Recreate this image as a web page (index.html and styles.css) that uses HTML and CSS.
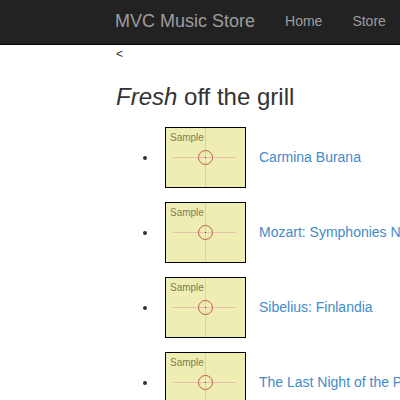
FILE: index.html
```html
<!DOCTYPE html>
<html>
<head>
<meta charset="utf-8">
<link rel="stylesheet" href="styles.css">
</head>
<body>
<div class="navbar">
  <a class="brand" href="#">MVC Music Store</a>
  <a class="nav-link" href="#">Home</a>
  <a class="nav-link" href="#">Store</a>
</div>
<div class="container">
  <div class="back">&lt;</div>
  <h3 class="title"><em>Fresh</em> off the grill</h3>
  <ul class="albums">
    <li class="album"><span class="art"><span class="sample">Sample</span><span class="hline"></span><span class="vline"></span><span class="circle"></span><span class="dot"></span></span><a class="album-link" href="#">Carmina Burana</a></li>
    <li class="album"><span class="art"><span class="sample">Sample</span><span class="hline"></span><span class="vline"></span><span class="circle"></span><span class="dot"></span></span><a class="album-link" href="#">Mozart: Symphonies Nos. 40 &amp; 41</a></li>
    <li class="album"><span class="art"><span class="sample">Sample</span><span class="hline"></span><span class="vline"></span><span class="circle"></span><span class="dot"></span></span><a class="album-link" href="#">Sibelius: Finlandia</a></li>
    <li class="album"><span class="art"><span class="sample">Sample</span><span class="hline"></span><span class="vline"></span><span class="circle"></span><span class="dot"></span></span><a class="album-link" href="#">The Last Night of the Proms</a></li>
  </ul>
</div>
</body>
</html>
```
FILE: styles.css
```css
html, body {
  margin: 0;
  padding: 0;
  overflow: hidden;
}
body {
  font-family: "Liberation Sans", Arial, sans-serif;
  font-size: 14px;
  line-height: 1.42857;
  color: #333;
  background: #fff;
  width: 400px;
}
.navbar {
  background: #222;
  border-bottom: 1px solid #080808;
  height: 44px;
  display: flex;
  align-items: center;
  padding-left: 115px;
  white-space: nowrap;
}
.brand {
  font-size: 18px;
  color: #9d9d9d;
  text-decoration: none;
  margin-right: 30px;
}
.nav-link {
  color: #9d9d9d;
  text-decoration: none;
  margin-right: 30px;
}
.container {
  padding-left: 116px;
  white-space: nowrap;
}
.back {
  font-size: 12px;
  line-height: 16px;
  margin-top: 1px;
}
.title {
  font-size: 24px;
  font-weight: 500;
  line-height: 1.1;
  margin: 22px 0 10px;
  color: #333;
}
.albums {
  margin: 17px 0 0;
  padding-left: 42px;
  list-style: disc;
}
.album {
  margin-bottom: 14px;
  height: 61px;
}
.art {
  display: inline-block;
  vertical-align: middle;
  position: relative;
  margin-left: 7px;
  width: 81px;
  height: 61px;
  box-sizing: border-box;
  border: 1px solid #000;
  background: #eeeeb2;
}
.sample {
  position: absolute;
  left: 4px;
  top: 4px;
  font-family: "Liberation Sans", sans-serif;
  font-size: 10px;
  line-height: 11px;
  color: #7d7d58;
}
.hline {
  position: absolute;
  left: 7px;
  right: 9px;
  top: 29px;
  height: 1px;
  background: #e8bfa8;
}
.vline {
  position: absolute;
  top: 0;
  bottom: 0;
  left: 39px;
  width: 1px;
  background: #e8cba8;
}
.circle {
  position: absolute;
  left: 32px;
  top: 22px;
  width: 13px;
  height: 13px;
  border: 1px solid #c65a5a;
  border-radius: 50%;
}
.dot {
  position: absolute;
  left: 39px;
  top: 29px;
  width: 1px;
  height: 1px;
  background: #a03030;
}
.album-link {
  color: #428bca;
  text-decoration: none;
  margin-left: 13px;
  vertical-align: middle;
}
```
